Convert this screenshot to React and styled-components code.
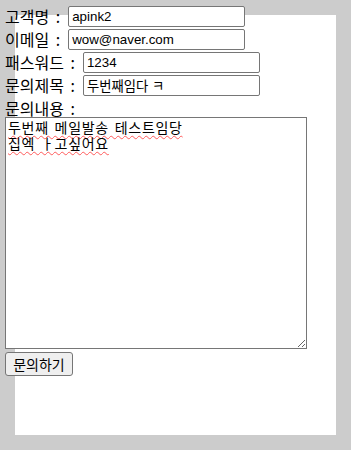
import React from "react";
import styled, { createGlobalStyle } from "styled-components";

const GlobalStyle = createGlobalStyle`
  html, body {
    margin: 0;
    padding: 0;
    background: #cccccc;
  }
  body {
    font-family: "Liberation Sans", "Noto Sans CJK KR", sans-serif;
  }
`;

const Page = styled.div`
  padding: 15px;
`;

const Panel = styled.div`
  display: flow-root;
  width: 321px;
  height: 420px;
  background: #ffffff;
`;

const Form = styled.form`
  margin: -10px 0 0 -10px;
  width: 340px;
`;

const Row = styled.div`
  display: flex;
  align-items: center;
  height: 23px;
  font-size: 16px;
  color: #000;
`;

const Label = styled.label`
  font-family: "Noto Sans CJK KR", "Liberation Sans", sans-serif;
  font-size: 16px;
  line-height: 23px;
  word-spacing: 3px;
  margin-right: 8px;
  white-space: pre;
`;

const Input = styled.input`
  box-sizing: border-box;
  width: 177px;
  height: 21px;
  padding: 1px 3px;
  border: 1px solid #767676;
  border-radius: 2px;
  font-family: "Liberation Sans", "Noto Sans CJK KR", sans-serif;
  font-size: 13.33px;
  color: #000;
  background: #fff;
  outline: none;
`;

const TextArea = styled.textarea`
  display: block;
  box-sizing: border-box;
  width: 302px;
  height: 232px;
  margin: -3px 0 0 0;
  padding: 1px 2px;
  border: 1px solid #767676;
  border-radius: 0;
  font-family: "Noto Sans CJK KR", "Liberation Sans", sans-serif;
  font-size: 14px;
  letter-spacing: 0.7px;
  word-spacing: 2px;
  line-height: 16px;
  color: #000;
  text-decoration: underline wavy #ff5a5a;
  text-decoration-thickness: 1px;
  text-underline-offset: 2px;
  outline: none;
`;

const Submit = styled.button`
  display: block;
  box-sizing: border-box;
  width: 68px;
  height: 24px;
  margin-top: 3px;
  padding: 0 6px;
  background: #efefef;
  border: 1px solid #767676;
  border-radius: 3px;
  font-family: "Noto Sans CJK KR", "Liberation Sans", sans-serif;
  font-size: 14px;
  color: #000;
`;

const fields = [
  { label: "고객명 :", value: "apink2" },
  { label: "이메일 :", value: "wow@naver.com" },
  { label: "패스워드 :", value: "1234" },
  { label: "문의제목 :", value: "두번째임다 ㅋ" },
];

const App = () => {
  return (
    <>
      <GlobalStyle />
      <Page>
        <Panel>
          <Form onSubmit={(e) => e.preventDefault()}>
            {fields.map((f) => (
              <Row key={f.label}>
                <Label>{f.label}</Label>
                <Input defaultValue={f.value} />
              </Row>
            ))}
            <Row>
              <Label>문의내용 :</Label>
            </Row>
            <TextArea
              spellCheck={false}
              defaultValue={"두번째 메일발송 테스트임당\n집엑 ㅏ고싶어요"}
            />
            <Submit type="submit">문의하기</Submit>
          </Form>
        </Panel>
      </Page>
    </>
  );
};

export default App;
